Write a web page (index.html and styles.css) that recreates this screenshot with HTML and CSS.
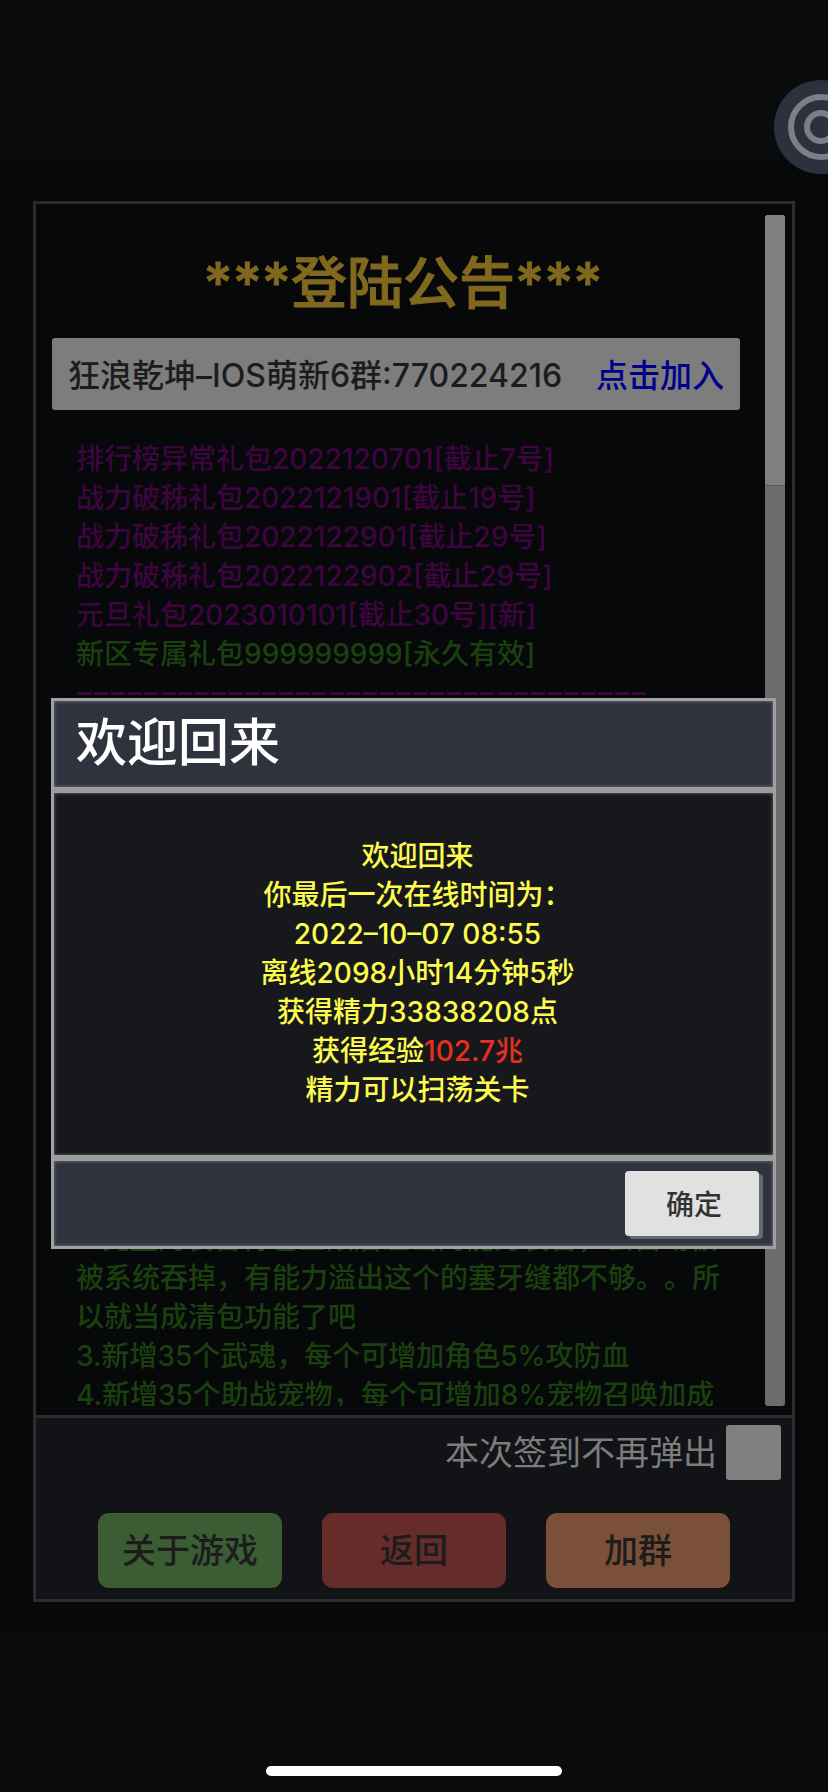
FILE: index.html
```html
<!DOCTYPE html>
<html lang="zh-CN">
<head>
    <meta charset="UTF-8">
    <meta name="viewport" content="width=device-width, initial-scale=1.0">
    <title>登陆公告</title>
    <link rel="stylesheet" href="styles.css">
</head>
<body>
    <div class="safe-top"></div>
    <main class="game">
        <section class="panel">
            <div class="scroll">
                <div class="content">
                    <h1>***登陆公告***</h1>
                    <div class="join">
                        <span>狂浪乾坤–IOS萌新6群:770224216</span>
                        <a href="#join">点击加入</a>
                    </div>
                    <ul class="gifts">
                        <li>排行榜异常礼包2022120701[截止7号]</li>
                        <li>战力破秭礼包2022121901[截止19号]</li>
                        <li>战力破秭礼包2022122901[截止29号]</li>
                        <li>战力破秭礼包2022122902[截止29号]</li>
                        <li>元旦礼包2023010101[截止30号][新]</li>
                        <li class="green">新区专属礼包999999999[永久有效]</li>
                        <li class="line">−−−−−−−−−−−−−−−−−−−−−−−−−−−−−−−−−−</li>
                    </ul>
                    <div class="updates">
                        <p>2.完整的装备背包上限后溢出的能力装备，会自动被<br>被系统吞掉，有能力溢出这个的塞牙缝都不够。。所以就当成清包功能了吧</p>
                        <p>3.新增35个武魂，每个可增加角色5%攻防血</p>
                        <p>4.新增35个助战宠物，每个可增加8%宠物召唤加成</p>
                    </div>
                </div>
                <div class="scrollbar"><div class="thumb"></div></div>
            </div>
            <footer class="bottom">
                <div class="option">
                    <label for="hide">本次签到不再弹出</label>
                    <input type="checkbox" id="hide">
                </div>
                <div class="buttons">
                    <button class="about">关于游戏</button>
                    <button class="back">返回</button>
                    <button class="group">加群</button>
                </div>
            </footer>
        </section>
    </main>
    <div class="safe-bottom"><div class="home-bar"></div></div>

    <!-- 悬浮按钮 -->
    <button class="float" aria-label="菜单">
        <svg viewBox="0 0 96 96" width="96" height="96">
            <circle cx="48" cy="48" r="47" fill="#2b313d"/>
            <circle cx="48" cy="48" r="30" fill="none" stroke="#7c7f83" stroke-width="6"/>
            <circle cx="48" cy="48" r="14" fill="none" stroke="#7c7f83" stroke-width="6"/>
        </svg>
    </button>

    <!-- 离线奖励弹窗 -->
    <div class="dialog" role="dialog" aria-labelledby="dialog-title">
        <h2 id="dialog-title">欢迎回来</h2>
        <div class="dialog-body">
            欢迎回来<br>
            你最后一次在线时间为：<br>
            2022–10–07 08:55<br>
            离线2098小时14分钟5秒<br>
            获得精力33838208点<br>
            获得经验<span class="red">102.7兆</span><br>
            精力可以扫荡关卡
        </div>
        <div class="dialog-foot">
            <button class="ok">确定</button>
        </div>
    </div>
</body>
</html>
```
FILE: styles.css
```css
* {
    box-sizing: border-box;
}
body {
    margin: 0;
    min-height: 100vh;
    display: flex;
    flex-direction: column;
    position: relative;
    overflow-x: hidden;
    background-color: #0a0b0d;
    font-family: Inter, "Noto Sans CJK SC", sans-serif;
    font-size: 28px;
    font-weight: 500;
    line-height: 39px;
    text-spacing-trim: space-all;
}
button {
    font: inherit;
    border: none;
    padding: 0;
    cursor: pointer;
}
.safe-top {
    height: 160px;
}
.game {
    flex: 1;
    padding: 41px 33px 30px;
    background-color: #060809;
}
.panel {
    border: 3px solid #2b2c2e;
}
.scroll {
    display: flex;
    justify-content: space-between;
    height: 1211px;
    padding: 11px 7px 9px 16px;
}
.content {
    width: 688px;
    overflow: hidden;
}
h1 {
    margin: 31px 0 17px;
    padding-left: 14px;
    font-size: 56px;
    font-weight: 500;
    line-height: 75px;
    text-align: center;
    color: #80681e;
    -webkit-text-stroke: 1px #80681e;
}
.join {
    display: flex;
    justify-content: space-between;
    align-items: center;
    height: 72px;
    padding: 2px 16px 0;
    border-radius: 3px;
    background-color: #7d7d7d;
    color: #1c1c1c;
    font-size: 32px;
    white-space: nowrap;
}
.join a {
    color: #00008a;
    text-decoration: none;
}
.gifts {
    list-style: none;
    margin: 30px 0 0;
    padding: 0 0 0 24px;
    color: #3d0540;
    white-space: nowrap;
}
.green {
    color: #1a400e;
}
.line {
    height: 39px;
    font-family: "Liberation Mono", monospace;
    font-weight: 700;
    line-height: 43px;
}
.updates {
    /* 中间的公告被弹窗挡住 */
    margin-top: 507px;
    padding: 0 10px 0 24px;
    color: #1a400e;
}
.updates p {
    margin: 0;
}
.scrollbar {
    width: 20px;
    border-radius: 3px;
    background-color: #6c6c6c;
}
.thumb {
    height: 271px;
    border-radius: 3px;
    border-bottom: 1px solid #5a5a5a;
    background-color: #808080;
}
.bottom {
    border-top: 3px solid #2b2c2e;
    background-color: #121317;
    padding: 7px 11px 11px;
}
.option {
    display: flex;
    justify-content: flex-end;
    align-items: center;
    gap: 9px;
    color: #7c7c7c;
    font-size: 34px;
    font-weight: 400;
}
.option input {
    appearance: none;
    width: 55px;
    height: 55px;
    margin: 0;
    border-radius: 3px;
    background-color: #808080;
}
.buttons {
    display: flex;
    justify-content: center;
    gap: 40px;
    margin-top: 33px;
}
.buttons button {
    width: 184px;
    height: 75px;
    border-radius: 11px;
    color: #1c1c1c;
    font-size: 34px;
}
.buttons .about {
    background-color: #3c5c33;
}
.buttons .back {
    background-color: #652c2a;
}
.buttons .group {
    background-color: #7b5038;
}
.safe-bottom {
    height: 160px;
    padding-bottom: 16px;
    display: flex;
    justify-content: center;
    align-items: flex-end;
}
.home-bar {
    width: 296px;
    height: 10px;
    border-radius: 5px;
    background-color: #fff;
}
.float {
    position: absolute;
    top: 79px;
    right: -41px;
    background: none;
    line-height: 0;
}
.dialog {
    position: absolute;
    top: 698px;
    left: 51px;
    right: 52px;
    border: 3px solid #a0a0a0;
    background-color: #17181c;
}
.dialog h2 {
    margin: 0;
    padding: 4px 22px 6px;
    font-size: 51px;
    font-weight: 500;
    line-height: 76px;
    color: #fff;
    background-color: #2f333e;
    box-shadow: inset 0 0 3px 1px #5c5f68;
}
.dialog-body {
    padding: 44px 0 45px 8px;
    border-top: 6px solid #9c9c9e;
    border-bottom: 6px solid #9c9c9e;
    box-shadow: inset 0 0 3px 1px #4a4b4f;
    text-align: center;
    color: #fdfb4e;
}
.red {
    color: #e8301f;
}
.dialog-foot {
    display: flex;
    justify-content: flex-end;
    padding: 10px 14px;
    background-color: #2f333e;
    box-shadow: inset 0 0 3px 1px #5c5f68;
}
.ok {
    width: 134px;
    height: 65px;
    padding: 4px 0 0 4px;
    border-radius: 4px;
    background-color: #e1e1e1;
    color: #333;
    box-shadow: 4px 3px 0 #656873;
}
```
